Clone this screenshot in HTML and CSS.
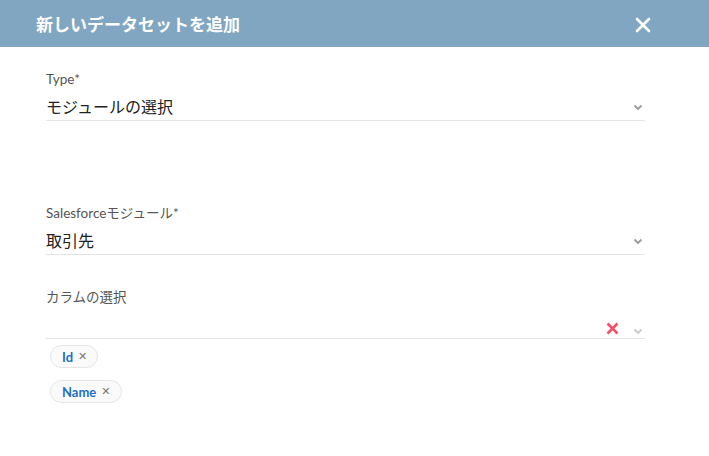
FILE: index.html
```html
<!DOCTYPE html>
<html lang="ja">
<head>
<meta charset="utf-8">
<link rel="stylesheet" href="styles.css">
</head>
<body>
<header class="header">
  <h1 class="title">新しいデータセットを追加</h1>
  <svg class="close" width="16" height="16" viewBox="0 0 16 16"><path d="M2 2 L14 14 M14 2 L2 14" stroke="#fff" stroke-width="2.6" stroke-linecap="round"/></svg>
</header>
<main class="content">
  <div class="field field-type">
    <div class="label">Type*</div>
    <div class="control">
      <span class="value">モジュールの選択</span>
      <svg class="chev" width="10" height="7" viewBox="0 0 10 7"><path d="M1.5 1.5 L5 5 L8.5 1.5" fill="none" stroke="#999" stroke-width="1.8"/></svg>
    </div>
  </div>
  <div class="field field-sf">
    <div class="label">Salesforceモジュール*</div>
    <div class="control">
      <span class="value">取引先</span>
      <svg class="chev" width="10" height="7" viewBox="0 0 10 7"><path d="M1.5 1.5 L5 5 L8.5 1.5" fill="none" stroke="#999" stroke-width="1.8"/></svg>
    </div>
  </div>
  <div class="field field-cols">
    <div class="label label-cols">カラムの選択</div>
    <div class="control control-cols">
      <span class="value"></span>
      <svg class="clear" width="13" height="13" viewBox="0 0 13 13"><path d="M1.5 1.5 L11.5 11.5 M11.5 1.5 L1.5 11.5" stroke="#f4506a" stroke-width="2.6"/></svg>
      <svg class="chev chev-light" width="10" height="7" viewBox="0 0 10 7"><path d="M1.5 1.5 L5 5 L8.5 1.5" fill="none" stroke="#c8c8c8" stroke-width="1.8"/></svg>
    </div>
    <div class="chips">
      <span class="chip">Id <span class="chip-x">✕</span></span>
      <span class="chip">Name <span class="chip-x">✕</span></span>
    </div>
  </div>
</main>
</body>
</html>
```
FILE: styles.css
```css
* { box-sizing: border-box; }
html, body { margin: 0; padding: 0; background: #fff; }
body {
  font-family: "Lato", "Noto Sans CJK JP", sans-serif;
  width: 709px;
  height: 456px;
  overflow: hidden;
}
.header {
  height: 47px;
  background: #80a6c2;
  display: flex;
  align-items: center;
  justify-content: space-between;
  padding: 0 58px 0 36px;
}
.title {
  margin: 0;
  color: #fff;
  font-size: 17px;
  font-weight: 700;
  font-family: "Noto Sans CJK JP", sans-serif;
  letter-spacing: 0;
}
.close { display: block; margin-top: 2px; }
.content {
  padding: 24px 64px 0 46px;
}
.field { display: flex; flex-direction: column; }
.field-sf { margin-top: 84px; }
.field-cols { margin-top: 34px; }
.label {
  font-size: 13.5px;
  line-height: 16px;
  color: #555;
  font-family: "Lato", "Noto Sans CJK JP", sans-serif;
}
.control {
  display: flex;
  align-items: center;
  border-bottom: 1px solid #e4e4e4;
  height: 34px;
  padding-top: 4px;
}
.value {
  flex: 1;
  font-size: 16px;
  color: #222;
  font-family: "Noto Sans CJK JP", sans-serif;
}
.chev { margin-right: 2px; margin-top: 4px; }
.control-cols { height: 34px; padding-top: 14px; }
.clear { margin-right: 14px; }
.chev-light { margin-top: 6px; }
.chips {
  display: flex;
  flex-direction: column;
  align-items: flex-start;
  gap: 12px;
  padding: 6px 0 0 4px;
}
.chip {
  display: inline-flex;
  align-items: center;
  height: 23px;
  padding: 0 10px 0 11px;
  border: 1px solid #e5e5e5;
  border-radius: 12px;
  background: #fafafa;
  color: #1f6fc1;
  font-size: 13px;
  font-weight: 700;
  font-family: "Lato", sans-serif;
}
.chip-x {
  color: #777;
  font-size: 11px;
  font-weight: 700;
  margin-left: 5px;
  font-family: "DejaVu Sans", sans-serif;
}
```
